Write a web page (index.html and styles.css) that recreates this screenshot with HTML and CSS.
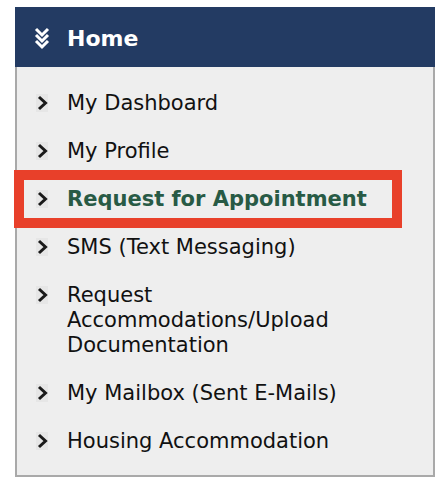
FILE: index.html
```html
<!DOCTYPE html>
<html>
<head>
<meta charset="utf-8">
<link rel="stylesheet" href="styles.css">
</head>
<body>
<div class="panel">
  <div class="panel-head">
    <svg class="head-icon" width="16" height="22" viewBox="0 0 16 22">
      <defs><filter id="soft" x="-20%" y="-20%" width="140%" height="140%"><feGaussianBlur stdDeviation="0.5"/></filter></defs>
      <g fill="none" stroke="#ffffff" stroke-width="3" stroke-linecap="butt" stroke-linejoin="miter" filter="url(#soft)">
        <path d="M2 2 L8 8 L14 2"/>
        <path d="M2 8 L8 14 L14 8"/>
        <path d="M2 14 L8 20 L14 14"/>
      </g>
    </svg>
    <span class="head-title">Home</span>
  </div>
  <ul class="menu">
    <li class="item"><svg class="chev" width="12" height="18" viewBox="0 0 12 18"><path d="M3 3 L9.5 9 L3 15"/></svg><a class="label">My Dashboard</a></li>
    <li class="item"><svg class="chev" width="12" height="18" viewBox="0 0 12 18"><path d="M3 3 L9.5 9 L3 15"/></svg><a class="label">My Profile</a></li>
    <li class="item active"><svg class="chev" width="12" height="18" viewBox="0 0 12 18"><path d="M3 3 L9.5 9 L3 15"/></svg><a class="label">Request for Appointment</a></li>
    <li class="item"><svg class="chev" width="12" height="18" viewBox="0 0 12 18"><path d="M3 3 L9.5 9 L3 15"/></svg><a class="label">SMS (Text Messaging)</a></li>
    <li class="item"><svg class="chev" width="12" height="18" viewBox="0 0 12 18"><path d="M3 3 L9.5 9 L3 15"/></svg><a class="label">Request Accommodations/Upload Documentation</a></li>
    <li class="item"><svg class="chev" width="12" height="18" viewBox="0 0 12 18"><path d="M3 3 L9.5 9 L3 15"/></svg><a class="label">My Mailbox (Sent E-Mails)</a></li>
    <li class="item"><svg class="chev" width="12" height="18" viewBox="0 0 12 18"><path d="M3 3 L9.5 9 L3 15"/></svg><a class="label">Housing Accommodation</a></li>
  </ul>
</div>
</body>
</html>
```
FILE: styles.css
```css
html, body {
  margin: 0;
  padding: 0;
  background: #ffffff;
}
body {
  font-family: "DejaVu Sans", Verdana, sans-serif;
}
.panel {
  width: 420px;
  margin: 7px 0 0 15px;
}
.panel-head {
  height: 60px;
  background: #233b63;
  display: flex;
  align-items: center;
  padding-left: 19px;
  box-sizing: border-box;
}
.head-icon {
  display: block;
  margin-right: 17px;
  margin-top: 2px;
}
.head-title {
  color: #ffffff;
  font-weight: bold;
  font-size: 22px;
  line-height: 26px;
  margin-top: 4px;
}
.menu {
  list-style: none;
  margin: 0;
  padding: 24px 10px 21px 19px;
  background: #eeeeee;
  border: 2px solid #a9a9a9;
  border-top: none;
  display: flex;
  flex-direction: column;
  gap: 23px;
}
.item {
  position: relative;
  display: grid;
  grid-template-columns: 12px 1fr;
  column-gap: 19px;
  align-items: start;
  font-size: 21px;
  line-height: 25px;
  color: #111111;
}
.chev {
  display: block;
  margin-top: 3px;
  background: #e6e6e6;
  fill: none;
  stroke: #1a1a1a;
  stroke-width: 3;
}
.label {
  color: inherit;
  text-decoration: none;
  padding-right: 70px;
}
.active .label {
  color: #285a45;
  font-weight: bold;
  padding-right: 0;
}
.active::after {
  content: "";
  position: absolute;
  left: -22px;
  top: -17px;
  width: 388px;
  height: 58px;
  border: 10px solid #e8402a;
  box-sizing: border-box;
  pointer-events: none;
}
```
